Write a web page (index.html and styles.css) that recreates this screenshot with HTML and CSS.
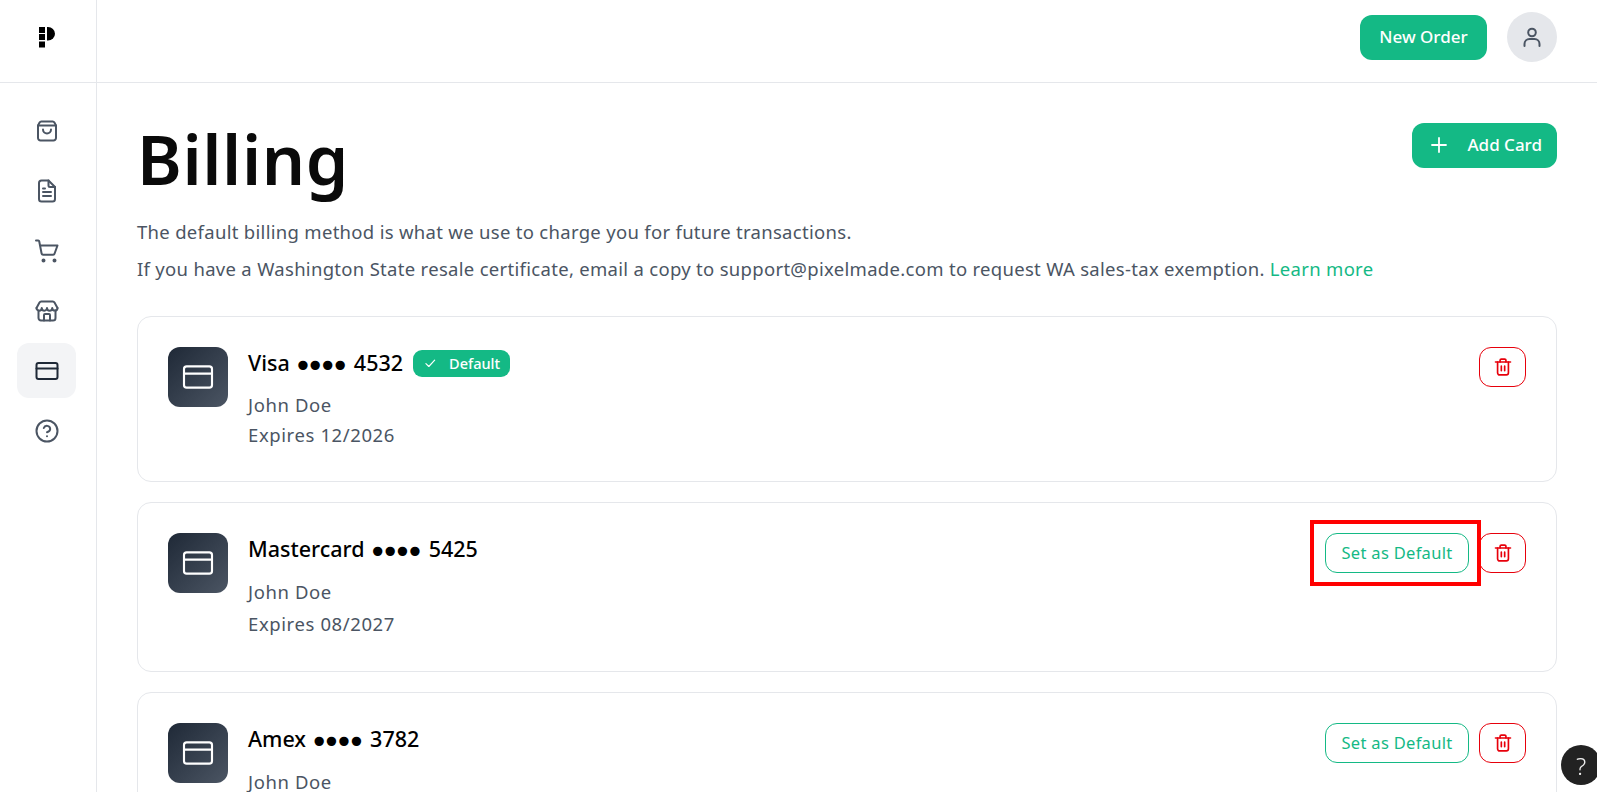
FILE: index.html
```html
<!DOCTYPE html>
<html>
<head>
<meta charset="utf-8">
<link rel="stylesheet" href="styles.css">
<title>Billing</title>
</head>
<body>
<div class="topbar">
	<div class="logo-cell">
		<svg class="logo" viewBox="0 0 16 22" width="16" height="22">
			<rect x="0" y="1" width="6" height="6"/>
			<rect x="0" y="8" width="6" height="6"/>
			<rect x="0" y="15.5" width="6" height="6"/>
			<path d="M8 1h1a7 6.75 0 0 1 0 13.5H8z"/>
		</svg>
	</div>
	<div class="topbar-right">
		<a class="btn btn-solid btn-order">New Order</a>
		<div class="avatar">
			<svg class="ico" viewBox="0 0 24 24"><circle cx="12" cy="7.5" r="3.8"/><path d="M4.5 21v-2a5 5 0 0 1 5-5h5a5 5 0 0 1 5 5v2"/></svg>
		</div>
	</div>
</div>

<div class="layout">
	<div class="sidebar">
		<a class="nav-item">
			<svg class="ico" viewBox="0 0 24 24"><path d="M6.3 2.5h11.4a2 2 0 0 1 1.7 1L21 6.5V19a2.5 2.5 0 0 1-2.5 2.5h-13A2.5 2.5 0 0 1 3 19V6.5l1.6-3a2 2 0 0 1 1.7-1z"/><path d="M3 6.5h18"/><path d="M8 10.5a4 4 0 0 0 8 0"/></svg>
		</a>
		<a class="nav-item">
			<svg class="ico" viewBox="0 0 24 24"><path d="M13.5 1.5H6.5A2.5 2.5 0 0 0 4 4v16a2.5 2.5 0 0 0 2.5 2.5h11A2.5 2.5 0 0 0 20 20V8z"/><path d="M13.5 1.5V6.5A1.5 1.5 0 0 0 15 8h5"/><path d="M8 9.5h2M8 13h8M8 17h8"/></svg>
		</a>
		<a class="nav-item">
			<svg class="ico" viewBox="0 0 24 24"><path d="M1 1.5h2.2a1 1 0 0 1 1 .8l2.4 12.2a1.5 1.5 0 0 0 1.5 1.2h10a1.5 1.5 0 0 0 1.5-1.2L22.5 6.5H5"/><circle class="dot" cx="8.5" cy="21.5" r="1"/><circle class="dot" cx="19.5" cy="21.5" r="1"/></svg>
		</a>
		<a class="nav-item">
			<svg class="ico" viewBox="0 0 24 24"><path d="M1.5 9L4.5 3.5a2 2 0 0 1 1.8-1h11.4a2 2 0 0 1 1.8 1L22.5 9"/><path d="M1.5 9a2.6 2.6 0 0 0 5.25 0 2.6 2.6 0 0 0 5.25 0 2.6 2.6 0 0 0 5.25 0 2.6 2.6 0 0 0 5.25 0"/><path d="M3.5 11.5V19A2.5 2.5 0 0 0 6 21.5h12a2.5 2.5 0 0 0 2.5-2.5v-7.5"/><path d="M9 21.5V16a1 1 0 0 1 1-1h4a1 1 0 0 1 1 1v5.5"/></svg>
		</a>
		<a class="nav-item active">
			<svg class="ico" viewBox="0 0 24 24"><rect x="1.5" y="4" width="21" height="16" rx="2"/><path d="M1.5 9.5h21"/></svg>
		</a>
		<a class="nav-item">
			<svg class="ico" viewBox="0 0 24 24"><circle cx="12" cy="12" r="10.5"/><path d="M8.8 9a3.3 3.3 0 0 1 6.4 1c0 2.2-3.2 3.2-3.2 3.2"/><path d="M12 17.3h.01"/></svg>
		</a>
	</div>

	<div class="main">
		<div class="page-head">
			<h1>Billing</h1>
			<a class="btn btn-solid btn-add">
				<svg class="ico plus" viewBox="0 0 24 24"><path d="M12 5v14M5 12h14"/></svg>
				Add Card
			</a>
		</div>
		<p class="intro">The default billing method is what we use to charge you for future transactions.</p>
		<p class="intro">If you have a Washington State resale certificate, email a copy to support@pixelmade.com to request WA sales-tax exemption. <a class="link">Learn more</a></p>

		<div class="cards">
			<div class="card first">
				<div class="card-icon">
					<svg class="ico" viewBox="0 0 24 24"><rect x="1.5" y="4" width="21" height="16" rx="2"/><path d="M1.5 9.5h21"/></svg>
				</div>
				<div class="card-info">
					<div class="card-title">
						<span class="card-name">Visa <span class="dots">••••</span> 4532</span>
						<span class="badge">
							<svg class="ico" viewBox="0 0 24 24"><path d="M5 13l5 5L20 7"/></svg>
							Default
						</span>
					</div>
					<div class="card-meta">John Doe</div>
					<div class="card-meta">Expires 12/2026</div>
				</div>
				<div class="card-actions">
					<a class="btn-delete"><svg class="ico" viewBox="0 0 24 24"><path d="M3 6h18"/><path d="M8.5 6V4a1.5 1.5 0 0 1 1.5-1.5h4A1.5 1.5 0 0 1 15.5 4v2"/><path d="M5.5 6v13A2.5 2.5 0 0 0 8 21.5h8a2.5 2.5 0 0 0 2.5-2.5V6"/><path d="M10 11v5.5M14 11v5.5"/></svg></a>
				</div>
			</div>

			<div class="card">
				<div class="card-icon">
					<svg class="ico" viewBox="0 0 24 24"><rect x="1.5" y="4" width="21" height="16" rx="2"/><path d="M1.5 9.5h21"/></svg>
				</div>
				<div class="card-info">
					<div class="card-title"><span class="card-name">Mastercard <span class="dots">••••</span> 5425</span></div>
					<div class="card-meta">John Doe</div>
					<div class="card-meta">Expires 08/2027</div>
				</div>
				<div class="card-actions">
					<a class="btn-default">Set as Default<span class="marker"></span></a>
					<a class="btn-delete"><svg class="ico" viewBox="0 0 24 24"><path d="M3 6h18"/><path d="M8.5 6V4a1.5 1.5 0 0 1 1.5-1.5h4A1.5 1.5 0 0 1 15.5 4v2"/><path d="M5.5 6v13A2.5 2.5 0 0 0 8 21.5h8a2.5 2.5 0 0 0 2.5-2.5V6"/><path d="M10 11v5.5M14 11v5.5"/></svg></a>
				</div>
			</div>

			<div class="card">
				<div class="card-icon">
					<svg class="ico" viewBox="0 0 24 24"><rect x="1.5" y="4" width="21" height="16" rx="2"/><path d="M1.5 9.5h21"/></svg>
				</div>
				<div class="card-info">
					<div class="card-title"><span class="card-name">Amex <span class="dots">••••</span> 3782</span></div>
					<div class="card-meta">John Doe</div>
				</div>
				<div class="card-actions">
					<a class="btn-default">Set as Default</a>
					<a class="btn-delete"><svg class="ico" viewBox="0 0 24 24"><path d="M3 6h18"/><path d="M8.5 6V4a1.5 1.5 0 0 1 1.5-1.5h4A1.5 1.5 0 0 1 15.5 4v2"/><path d="M5.5 6v13A2.5 2.5 0 0 0 8 21.5h8a2.5 2.5 0 0 0 2.5-2.5V6"/><path d="M10 11v5.5M14 11v5.5"/></svg></a>
				</div>
			</div>
		</div>
	</div>
</div>

<div class="help">?</div>
</body>
</html>
```

FILE: styles.css
```css
*{box-sizing:border-box;}
html,body{height:100%;}
body{margin:0; height:792px; overflow:hidden; background:#fff; color:#000; font-family:"Noto Sans","Open Sans",sans-serif; font-size:18px;}
a{display:inline-flex;}

.ico{width:24px; height:24px; fill:none; stroke:#4b5563; stroke-width:2; stroke-linecap:round; stroke-linejoin:round;}
.ico .dot{fill:#4b5563;}

.topbar{display:flex; height:83px; border-bottom:1px solid #e5e7eb;}
.logo-cell{width:97px; display:flex; align-items:center; justify-content:center; padding-bottom:8px; padding-right:2px; border-right:1px solid #e5e7eb;}
.logo{fill:#000;}
.topbar-right{flex:1; display:flex; align-items:flex-start; justify-content:flex-end; gap:20px; padding:12px 40px 0 0;}
.avatar{width:50px; height:50px; border-radius:50%; background:#e5e7eb; display:flex; align-items:center; justify-content:center;}

.btn{align-items:center; border-radius:12px; height:45px; padding-bottom:2px; font-size:17px; font-weight:500; color:#fff;}
.btn-solid{background:#14b985;}
.btn-order{margin-top:3px; width:127px; justify-content:center;}
.btn-add{width:145px; padding:0 15px 2px 15px; justify-content:space-between;}
.plus{stroke:#fff; stroke-width:1.8;}

.layout{display:flex; height:709px;}
.sidebar{width:97px; border-right:1px solid #e5e7eb; padding:20px 20px 0 17px; display:flex; flex-direction:column; gap:5px;}
.nav-item{height:55px; align-items:center; justify-content:center; border-radius:12px;}
.nav-item.active{background:#f3f4f6;}
.nav-item.active .ico{stroke:#1f2937;}

.main{flex:1; padding:40px 40px 0 40px;}
.page-head{display:flex; justify-content:space-between; align-items:flex-start; height:90px;}
h1{margin:0; font-size:68px; font-weight:600; line-height:72px; color:#0a0a0a; letter-spacing:.6px;}
.intro{margin:0; color:#4b5563; font-size:18.5px; letter-spacing:.3px; line-height:37px;}
.link{display:inline; color:#14b985;}

.cards{margin-top:29px; display:flex; flex-direction:column; gap:20px;}
.card{display:flex; align-items:flex-start; padding:30px; border:1px solid #e5e7eb; border-radius:14px; min-height:170px;}
.card.first{min-height:166px;}
.card-icon{width:60px; height:60px; flex:none; border-radius:12px; background:linear-gradient(135deg,#1f2937,#4b5563); display:flex; align-items:center; justify-content:center;}
.card-icon .ico{width:32px; height:32px; stroke:#fff; stroke-width:1.6;}
.card-info{flex:1; margin-left:20px;}
.card-title{display:flex; align-items:center; gap:10px; font-size:21.5px; font-weight:500; height:32px; color:#000;}
.card-name{padding-bottom:2px;}
.dots{font-family:"DejaVu Sans",sans-serif; font-size:32px; line-height:0; letter-spacing:-6.4px; margin-left:-2px; margin-right:5px; vertical-align:-6px;}
.card-meta{font-size:18.5px; letter-spacing:.6px; line-height:32px; color:#4b5563;}
.card.first .card-meta{line-height:30px;}
.card-title + .card-meta{margin-top:11px;}

.badge{display:flex; align-items:center; gap:12px; height:27px; padding:0 10px 0 10px; border-radius:9px; background:#14b985; color:#fff; font-size:14.5px; font-weight:500;}
.badge .ico{width:14px; height:14px; stroke:#fff;}

.card-actions{display:flex; gap:10px; flex:none;}
.btn-default{position:relative; width:144px; height:40px; padding-bottom:2px; align-items:center; justify-content:center; border:1px solid #14b985; border-radius:12px; color:#14b985; font-size:16.5px; letter-spacing:.3px;}
.btn-delete{width:47px; height:40px; align-items:center; justify-content:center; border:1px solid #e7000b; border-radius:12px;}
.btn-delete .ico{width:20px; height:20px; stroke:#e7000b;}
.marker{position:absolute; top:-14px; left:-16px; right:-13px; bottom:-14px; border:4px solid #f00;}

.help{position:fixed; right:-4px; bottom:7px; width:40px; height:40px; border-radius:50%; background:#222; color:#eee; font-weight:300; font-size:24px; display:flex; align-items:center; justify-content:center;}
```
